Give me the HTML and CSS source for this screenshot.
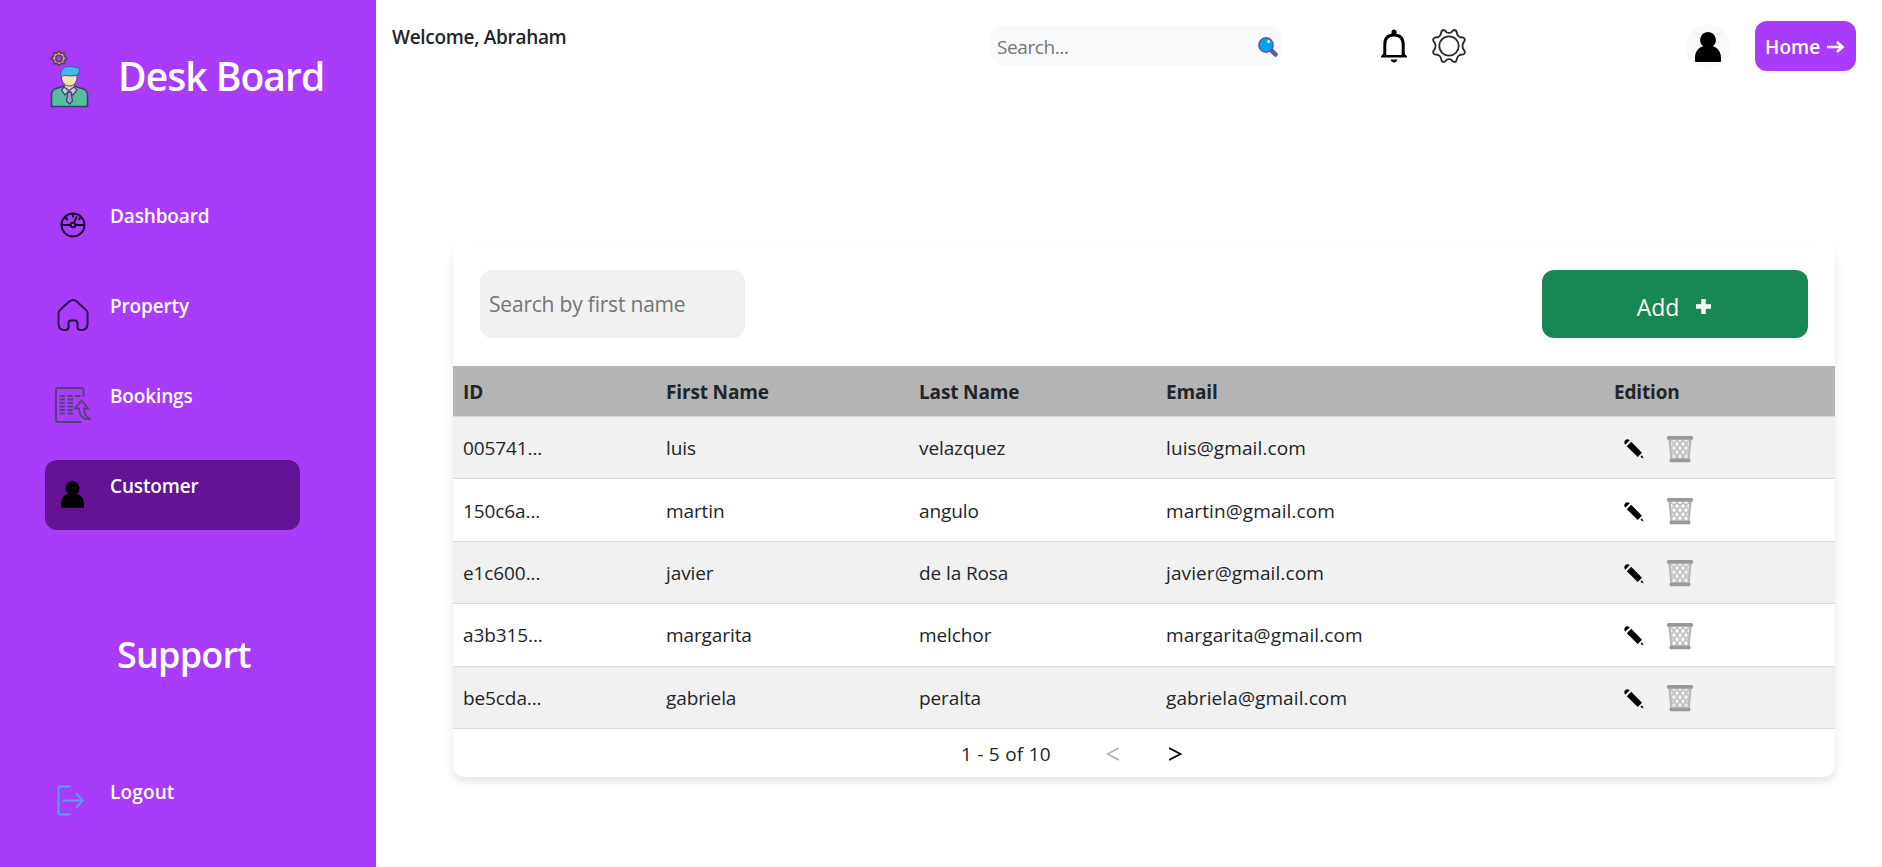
FILE: index.html
```html
<!DOCTYPE html>
<html lang="en">
<head>
<meta charset="utf-8">
<title>Desk Board</title>
<link rel="stylesheet" href="styles.css">
</head>
<body>
<svg class="defs" width="0" height="0">
  <symbol id="user" viewBox="0 0 26 30"><path d="M13 0a8 8 0 0 1 4.900 14.200C23 15.500 26 20 26 26v3a1 1 0 0 1-1 1H1a1 1 0 0 1-1-1v-3c0-6 3-10.500 8.100-11.800A8 8 0 0 1 13 0z"/></symbol>
  <symbol id="pencil" viewBox="0 0 20 20"><path d="M1.200 1.200Q3-.8 5.800 1.200L1.200 5.800Q-.6 3 1.200 1.200z"/><path d="M7.200 2.800 18 13.700 13.700 18 2.800 7.200z"/><path d="M18 16.300 19.700 19.500 16.300 18z"/></symbol>
  <symbol id="trash" viewBox="0 0 26 27">
    <path d="M2.500 3 4.500 23M23.500 3 21.500 23" stroke="#b8b8b8" stroke-width="2.400"/>
    <path d="M4 4 18 23M10 4 21 19M16 4 22 12M4 12 12 23M22 4 8 23M16 4 5 19M10 4 4 12M22 12 14 23" fill="none" stroke="#c2c2c2" stroke-width="1.900"/>
    <rect width="26" height="3.800" rx="1.500" fill="#999"/><rect x="2.500" y="22.500" width="21" height="3.800" rx="1.500" fill="#999"/>
  </symbol>
</svg>
<div class="app">
  <aside class="sidebar">
    <div class="brand">
      <svg class="brand-icon" viewBox="0 0 39 58">
        <path d="M9 1.200 11.200 3.200 14.200 3 14.400 6 16.800 8.300 14.600 10.500 14.300 13.500 11.300 13.400 9 15.600 6.700 13.400 3.700 13.500 3.500 10.500 1.200 8.300 3.500 6 3.700 3 6.700 3.200z" fill="#dba678" stroke="#5a4668" stroke-width="1.800"/>
        <circle cx="9" cy="8.400" r="3.200" fill="#a93bfb" stroke="#5a4668" stroke-width="1.600"/>
        <path d="M1.500 56.500V44Q2 39 8 38l6-2h10l6 2q7 1 7.500 6v12.500z" fill="#53bd9c" stroke="#35406e" stroke-width="1.600"/>
        <path d="M15 31h9v7l-4.500 5-4.500-5z" fill="#f3cfa0"/>
        <path d="M11.500 24v5q2 7 8 7t7.500-7v-5z" fill="#fde0b0" stroke="#4a4773"/>
        <path d="M11 28q-1.500-11 7-11.500 6-.5 11.500 2 .5 4-2.500 7-8 1-12 0-2-1-4 2.500z" fill="#46b5e9" stroke="#33659b"/>
        <path d="M14 37l-2.500 3 3.500 5 4-4 4 4 4-5-3-3-5 3.500z" fill="#c9c6e0" stroke="#444476" stroke-width="1.300"/>
        <path d="M18 42h3l1.500 9-3 3-3-3z" fill="#a7a0c8" stroke="#444476" stroke-width="1.300"/>
      </svg>
      <h1>Desk Board</h1>
    </div>
    <nav class="menu">
      <a class="item"><span class="ico"><svg width="26" height="26" viewBox="0 0 26 26" fill="none" stroke="#16042c" stroke-width="1.900"><circle cx="13" cy="13" r="11.500"/><circle cx="13" cy="13" r="2.300"/><path d="M2 13h8.500M15.500 13H24M14 10.500 16.800 4.500M13 2v3.500M5.200 5.200 7.700 8M20.800 5.200 18.400 8"/></svg></span><span>Dashboard</span></a>
      <a class="item"><span class="ico"><svg width="32" height="34" viewBox="0 0 32 34" fill="none" stroke="#2b0b48" stroke-width="2"><path d="M11.500 28V25q0-2.500 2.500-2.500h4q2.500 0 2.500 2.500v4q0 3 3 3h1q6 0 6-6V15q0-2-2-3.500L19.500 3.300q-3.500-2.600-7 0L3.500 11.500Q1.500 13 1.500 15v11q0 6 6 6h1q3 0 3-3z"/></svg></span><span>Property</span></a>
      <a class="item"><span class="ico"><svg width="36" height="36" viewBox="0 0 36 36" fill="none" stroke="#56407c" stroke-width="1.900"><path d="M28.500 9.500V3q0-2-2-2H3Q1 1 1 3v30q0 2 2 2h23.500M4.500 9h5.500M4.500 12.500h5.500M4.500 16h5.500M4.500 19.500h5.500M4.500 23h5.500M4.500 26.500h5.500M12.500 9H18M12.500 12.500H18M12.500 16H18M12.500 19.500H18M12.500 23H18M12.500 26.500H18M20 9h5.500"/><path d="M20 21.500 26.500 13.500 33 21.500h-4Q29 29 35 32q-10 1.500-11-10.500z"/></svg></span><span>Bookings</span></a>
      <a class="item active"><span class="ico"><svg width="23" height="27"><use href="#user"/></svg></span><span>Customer</span></a>
    </nav>
    <h2>Support</h2>
    <a class="item logout"><span class="ico"><svg width="32" height="32" viewBox="0 0 32 32" fill="none" stroke="#5f9ff0" stroke-width="1.900"><path d="M13.500 1.500H3.500Q1.500 1.500 1.500 3.500v24q0 2 2 2h10" stroke="#48a9ee"/><path d="M6 15.500H25.500M19 8.500 26 15.500 19 22.500"/></svg></span><span>Logout</span></a>
  </aside>
  <main class="main">
    <header class="topbar">
      <span class="welcome">Welcome, Abraham</span>
      <label class="search"><span>Search...</span>
        <svg width="20" height="20" viewBox="0 0 20 20"><path d="M13 13 17.500 17.500" stroke="#655799" stroke-width="4.500" stroke-linecap="round"/><circle cx="8" cy="8" r="7.200" fill="#00a3f0" stroke="#655799" stroke-width="1.400"/><rect x="9.500" y="3" width="2.300" height="3" rx=".6" fill="#fff"/></svg></label>
      <div class="actions">
        <svg width="28" height="34" viewBox="0 0 28 34"><path d="M4.800 27V15.500Q4.800 6 14 6t9.200 9.500V27" fill="none" stroke="#000" stroke-width="3"/><path d="M11.500 5V3a2.500 2.500 0 0 1 5 0v2zM4 24 1 27.300V28.500H27V27.300L24 24v2H4zM10.500 30.500h7Q16.500 33.500 14 33.500t-3.500-3z"/></svg>
        <svg width="34" height="34" viewBox="0 0 34 34" fill="none" stroke="#2a2a2a" stroke-width="1.800"><circle cx="17" cy="17" r="9.700"/><path d="M14.500 3.200Q17 4.600 19.500 3.200Q20.500 1 22.500 1Q24.800 1.500 24.800 4Q25.300 7 28 8.300Q31.500 8 32.500 9.500Q33.500 11.500 31.500 13.500Q29.500 17 31.500 20.500Q33.500 22.500 32.500 24.500Q31.500 26 28 25.700Q25.300 27 24.800 30Q24.800 32.500 22.500 33Q20.500 33 19.500 30.800Q17 29.400 14.500 30.800Q13.500 33 11.500 33Q9.200 32.500 9.200 30Q8.700 27 6 25.700Q2.500 26 1.500 24.500Q.5 22.500 2.500 20.500Q4.500 17 2.500 13.500Q.5 11.500 1.500 9.500Q2.500 8 6 8.300Q8.700 7 9.200 4Q9.200 1.500 11.500 1Q13.500 1 14.500 3.200z"/></svg>
      </div>
      <span class="avatar"><svg width="26" height="30"><use href="#user"/></svg></span>
      <a class="home"><span>Home</span><svg width="18" height="12" viewBox="0 0 18 12" fill="none" stroke="#fff" stroke-width="2.700"><path d="M0 6H15M10 1 15.500 6 10 11"/></svg></a>
    </header>
    <section class="card">
      <div class="tools">
        <div class="filter">Search by first name</div>
        <a class="add"><span>Add</span><svg width="15" height="15" viewBox="0 0 15 15"><path d="M0 7.500H15M7.500 0V15" stroke="#fff" stroke-width="4.500"/></svg></a>
      </div>
      <div class="row head"><span>ID</span><span>First Name</span><span>Last Name</span><span>Email</span><span>Edition</span></div>
      <div class="row odd"><span>005741...</span><span>luis</span><span>velazquez</span><span class="mail">luis@gmail.com</span><span class="edit"><svg width="20" height="20"><use href="#pencil"/></svg><svg width="26" height="27"><use href="#trash"/></svg></span></div>
      <div class="row"><span>150c6a...</span><span>martin</span><span>angulo</span><span class="mail">martin@gmail.com</span><span class="edit"><svg width="20" height="20"><use href="#pencil"/></svg><svg width="26" height="27"><use href="#trash"/></svg></span></div>
      <div class="row odd"><span>e1c600...</span><span>javier</span><span>de la Rosa</span><span class="mail">javier@gmail.com</span><span class="edit"><svg width="20" height="20"><use href="#pencil"/></svg><svg width="26" height="27"><use href="#trash"/></svg></span></div>
      <div class="row"><span>a3b315...</span><span>margarita</span><span>melchor</span><span class="mail">margarita@gmail.com</span><span class="edit"><svg width="20" height="20"><use href="#pencil"/></svg><svg width="26" height="27"><use href="#trash"/></svg></span></div>
      <div class="row odd"><span>be5cda...</span><span>gabriela</span><span>peralta</span><span class="mail">gabriela@gmail.com</span><span class="edit"><svg width="20" height="20"><use href="#pencil"/></svg><svg width="26" height="27"><use href="#trash"/></svg></span></div>
      <div class="pager"><span>1 - 5 of 10</span>
        <svg class="prev" width="13" height="14" viewBox="0 0 13 14" fill="none" stroke="#b0b0b0" stroke-width="1.600"><path d="M13 1 1.500 7 13 13"/></svg>
        <svg class="next" width="13" height="14" viewBox="0 0 13 14" fill="none" stroke="#000" stroke-width="1.900"><path d="M0 1 11.500 7 0 13"/></svg></div>
    </section>
  </main>
</div>
</body>
</html>
```

FILE: styles.css
```css
* { box-sizing: border-box; }
body { margin: 0; background: #fff; color: #212529; font: 19px/30px "Open Sans", "Noto Sans", sans-serif; letter-spacing: -0.1px; overflow: hidden; }
.defs { display: block; position: absolute; }
svg { display: block; flex: none; }
.app { display: flex; height: 867px; }
.sidebar { width: 376px; background: #a93bfb; color: #fff; flex: none; font-weight: 600; }
.brand { display: flex; height: 190px; padding: 50px 0 0 50px; }
.brand-icon { width: 39px; height: 58px; }
h1, h2 { margin: 0; font-weight: 600; }
h1 { margin-left: 29px; padding-top: 1px; font-size: 39px; line-height: 50px; letter-spacing: -0.95px; white-space: nowrap; }
h2 { height: 146px; margin-top: 90px; padding: 10px 0 0 117px; font-size: 36px; line-height: 50px; letter-spacing: -0.8px; }
.menu { display: flex; flex-direction: column; gap: 20px; }
.item { display: flex; width: 255px; height: 70px; margin-left: 45px; padding-top: 11px; border-radius: 12px; letter-spacing: -0.15px; }
.ico { display: flex; align-items: center; justify-content: center; width: 55px; height: 47px; margin-right: 10px; }
.active { background: #631393; }
.logout { letter-spacing: 0.15px; }
.main { flex: 1; }
.topbar { display: flex; height: 242px; padding-left: 16px; }
.welcome { width: 599px; padding-top: 22px; font-weight: 600; letter-spacing: -0.3px; }
.search { display: flex; align-items: center; justify-content: space-between; width: 291px; height: 41px; margin-top: 25px; padding: 3px 4px 0 6px; border-radius: 12px; background: #f8f9fa; color: #757575; letter-spacing: -0.4px; }
.actions { display: flex; gap: 24px; margin: 29px 0 0 98px; }
.avatar { display: flex; align-items: center; justify-content: center; width: 44px; height: 44px; margin: 24px 0 0 220px; padding-top: 1px; border-radius: 50%; background: #f8f9fa; }
.home { display: flex; align-items: center; gap: 7px; width: 101px; height: 50px; margin: 21px 0 0 25px; padding: 2px 0 0 10px; border-radius: 12px; background: #a93bfb; color: #fff; font-weight: 600; letter-spacing: 0.1px; }
.card { width: 1382px; height: 535px; margin-left: 77px; border-radius: 12px; background: #fff; box-shadow: 0 5px 10px rgba(0, 0, 0, .1); }
.tools { display: flex; justify-content: space-between; height: 124px; padding: 28px 27px 0; }
.filter { width: 265px; height: 68px; padding-left: 9px; border-radius: 12px; background: #f1f1f1; color: #757575; font-size: 21px; line-height: 68px; letter-spacing: -0.2px; }
.add { display: flex; align-items: center; justify-content: center; gap: 17px; width: 266px; height: 68px; padding: 5px 2px 0 0; border-radius: 12px; background: #198754; color: #fff; font-size: 23px; }
.row { display: grid; grid-template-columns: 203px 253px 247px 448px 1fr; align-items: center; height: 62.4px; padding: 1px 0 0 10px; border-bottom: 1px solid #dadbdc; }
.row.head { height: 51px; padding-top: 2px; background: #b4b4b4; font-weight: 700; letter-spacing: -0.15px; }
.odd { background: #f1f1f1; }
.mail { letter-spacing: 0.1px; }
.edit { display: flex; align-items: center; gap: 23px; padding: 2px 0 0 10px; }
.pager { display: flex; align-items: center; height: 49px; padding: 2px 0 0 508px; letter-spacing: 0.25px; }
.pager span { width: 145px; }
.next { margin-left: 50px; }
```
